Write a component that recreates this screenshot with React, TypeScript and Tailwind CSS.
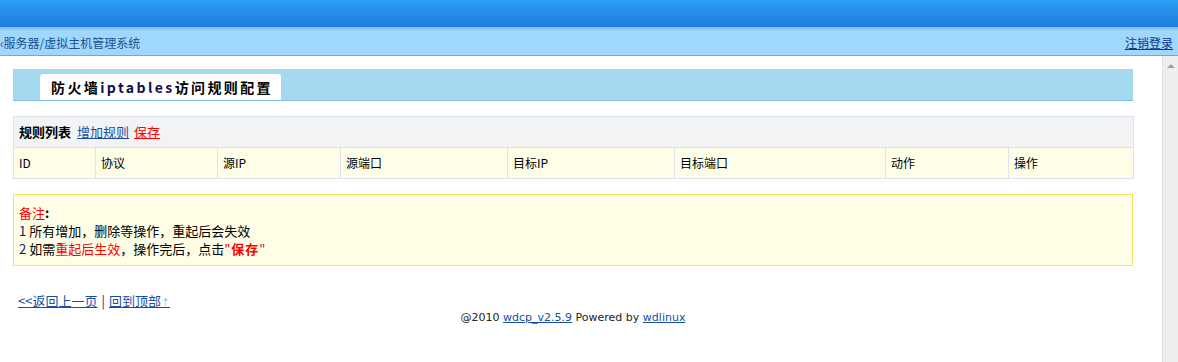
import React from 'react';

const cjk = { fontFamily: '"SimSun", "Noto Sans CJK SC", sans-serif' };

const columns = [
  { name: 'ID', width: 'w-[82px]' },
  { name: '协议', width: 'w-[122px]' },
  { name: '源IP', width: 'w-[123px]' },
  { name: '源端口', width: 'w-[167px]' },
  { name: '目标IP', width: 'w-[167px]' },
  { name: '目标端口', width: 'w-[211px]' },
  { name: '动作', width: 'w-[123px]' },
  { name: '操作', width: 'w-[125px]' },
];

const App = () => {
  return (
    <div className="w-[1178px] h-[362px] overflow-hidden bg-white text-[12px] text-black" style={cjk}>
      {/* Top banner */}
      <div className="h-[27px] bg-gradient-to-b from-[#2c9ef4] to-[#1e7ddb]" />
      <div className="h-[3px] bg-gradient-to-b from-[#7fbcee] to-[#8ec8f6]" />
      <div className="h-[26px] bg-[#a0d7fd] border-b border-[#5cb0e6] flex items-center justify-between pr-[5px]">
        <span className="text-[#1c4f8e]">‹服务器/虚拟主机管理系统</span>
        <a href="#" className="text-[#0b3a8a] underline">注销登录</a>
      </div>

      <div className="flex h-[306px]">
        {/* Page content */}
        <div className="flex-1 pl-[13px] pt-[13px]">
          {/* Title band */}
          <div className="w-[1120px] h-[32px] bg-[#a5d9ef] border-b border-[#7fbde2] flex items-end pl-[27px]">
            <div className="h-[26px] w-[241px] bg-white rounded-t-[3px] flex items-center pl-[11px] text-[14px] font-bold tracking-[2.4px]">
              防火墙<span className="text-[#10104a]">iptables</span>访问规则配置
            </div>
          </div>

          {/* Rules table */}
          <table className="mt-[15px] w-[1120px] border-collapse table-fixed">
            <colgroup>
              {columns.map((col) => (
                <col key={col.name} className={col.width} />
              ))}
            </colgroup>
            <tbody>
              <tr className="h-[31px] bg-[#f2f3f5]">
                <td colSpan={8} className="border border-[#dde3ea] px-[5px] text-[13px]">
                  <span className="font-bold">规则列表</span>
                  <a href="#" className="ml-[6px] text-[#164ea2] underline">增加规则</a>
                  <a href="#" className="ml-[5px] text-[#ff0000] underline">保存</a>
                </td>
              </tr>
              <tr className="h-[31px] bg-[#fefee8]">
                {columns.map((col) => (
                  <td key={col.name} className="border border-[#dde3ea] px-[5px]">
                    {col.name}
                  </td>
                ))}
              </tr>
            </tbody>
          </table>

          {/* Notes */}
          <div className="mt-[15px] w-[1120px] h-[72px] bg-[#fefee6] border border-[#ffdf66] px-[5px] pt-[9px] leading-[18px] text-[13px]">
            <div>
              <span className="text-[#ff0000]">备注</span>
              <span className="font-bold">:</span>
            </div>
            <div>
              <span className="text-[#1a1a6a]">1</span> 所有增加，删除等操作，重起后会失效
            </div>
            <div>
              <span className="text-[#1a1a6a]">2</span> 如需<span className="text-[#ff0000]">重起后生效</span>，操作完后，点击
              <span className="text-[#ff0000] tracking-[1px]">"<b>保存</b>"</span>
            </div>
          </div>

          {/* Footer */}
          <div className="mt-[27px] pl-[5px] leading-[16px] text-[13px]">
            <a href="#" className="text-[#164ea2] underline">&lt;&lt;返回上一页</a>
            <span className="mx-[4px] text-[#800060]">|</span>
            <a href="#" className="text-[#164ea2] underline">
              回到顶部<span className="text-[#7fb6e6] text-[9px]">↑</span>
            </a>
          </div>
          <div
            className="mt-[-1px] w-[1120px] text-center text-[#222]"
            style={{ fontFamily: '"DejaVu Sans", Verdana, sans-serif', fontSize: '11px' }}
          >
            @2010 <a href="#" className="text-[#164ea2] underline">wdcp_v2.5.9</a> Powered by{' '}
            <a href="#" className="text-[#164ea2] underline">wdlinux</a>
          </div>
        </div>

        {/* Fake scrollbar */}
        <div className="w-[16px] bg-[#eeeeee] border-l border-[#e2e2e2] flex justify-center pt-[8px]">
          <div className="w-0 h-0 border-l-[4px] border-r-[4px] border-b-[4px] border-l-transparent border-r-transparent border-b-[#a0a0a0]" />
        </div>
      </div>
    </div>
  );
};

export default App;
